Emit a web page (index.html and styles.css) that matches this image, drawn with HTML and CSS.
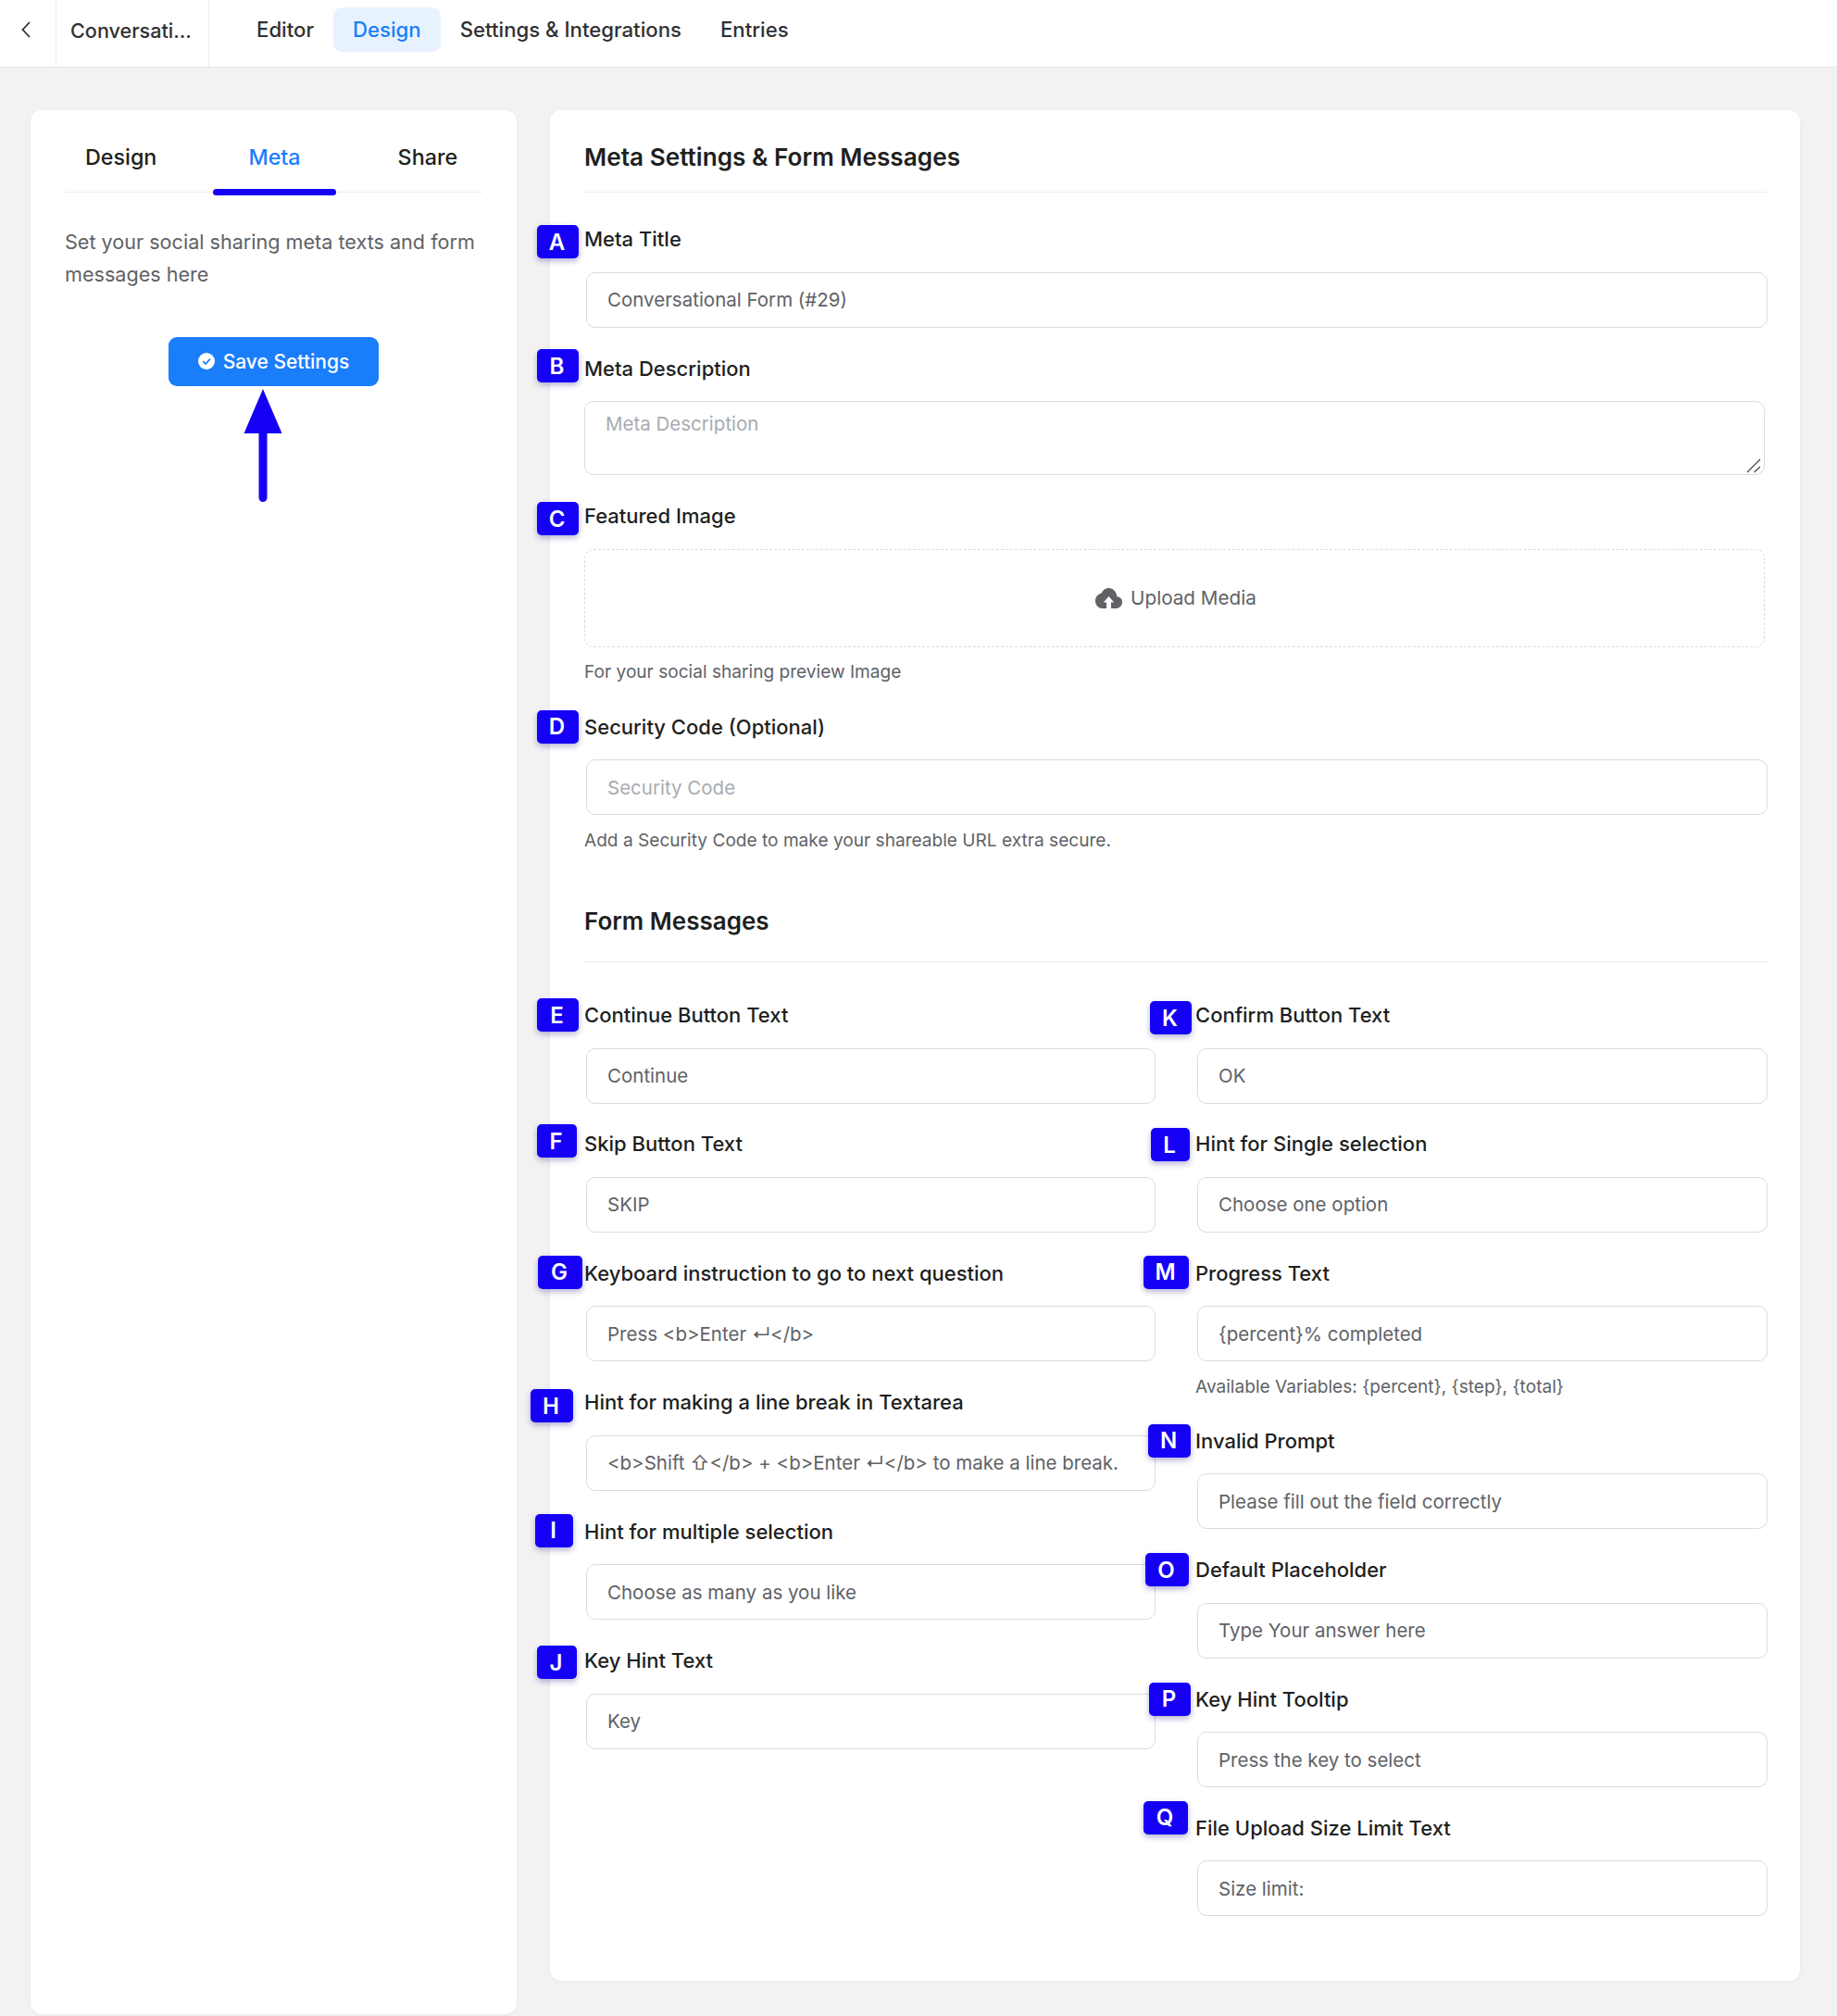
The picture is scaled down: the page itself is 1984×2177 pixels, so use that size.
FILE: index.html
```html
<!DOCTYPE html>
<html lang="en">
<head>
<meta charset="utf-8">
<title>Conversational Form - Meta Settings</title>
<link rel="stylesheet" href="styles.css">
</head>
<body>
<header class="topbar">
  <a class="back-cell"><svg class="back-icon" viewBox="0 0 12 20" width="12" height="20"><path d="M10 2 2.5 10 10 18" fill="none" stroke="#303133" stroke-width="1.8"/></svg></a>
  <div class="form-name">Conversati...</div>
  <nav class="topnav">
    <a class="topnav-item">Editor</a>
    <a class="topnav-item is-active">Design</a>
    <a class="topnav-item">Settings &amp; Integrations</a>
    <a class="topnav-item">Entries</a>
  </nav>
</header>
<main class="page">
  <aside class="side-card">
    <div class="side-tabs">
      <span class="side-tab">Design</span>
      <span class="side-tab is-active">Meta</span>
      <span class="side-tab">Share</span>
    </div>
    <p class="side-text">Set your social sharing meta texts and form messages here</p>
    <div class="save-wrap">
      <button class="save-btn"><svg class="save-icon" viewBox="0 0 18 18" width="18" height="18"><circle cx="9" cy="9" r="9" fill="#fff"/><path d="M5.2 9.2 8 12l4.9-5.4" fill="none" stroke="#1a7efb" stroke-width="1.7"/></svg>Save Settings</button>
      <svg class="up-arrow" viewBox="0 0 42 122" width="42" height="122"><path d="M21 0 41.500 48H25.500V117.500a4.500 4.500 0 0 1-9 0V48H.5Z" fill="#1500f5"/></svg>
    </div>
  </aside>
  <section class="main-card">
    <h2 class="card-title">Meta Settings &amp; Form Messages</h2>
    <div class="field inset2"><span class="badge b-a">A</span><label class="label">Meta Title</label><input class="input" value="Conversational Form (#29)"></div>
    <div class="field"><span class="badge b-b">B</span><label class="label">Meta Description</label>
      <div class="textarea-wrap"><textarea class="input textarea" placeholder="Meta Description"></textarea><svg class="grip" viewBox="0 0 18 16" width="18" height="16"><path d="M1 15 15 1M8.500 15 15 9" fill="none" stroke="#444" stroke-width="1.200"/></svg></div></div>
    <div class="field"><span class="badge b-c">C</span><label class="label">Featured Image</label>
      <div class="upload"><svg class="cloud" viewBox="0 0 29 22" width="29" height="22"><path d="M23.400 9.300C22.900 4 19 0 14.500 0 11 0 8 2.300 6.500 5.700 2.800 6.200 0 9.700 0 13.800 0 18.300 3.200 22 7.200 22H12V15.500H8.800L14.500 9l5.700 6.500H17V22h5.400C26 22 29 18.800 29 15c0-3-2.400-5.500-5.600-5.700Z" fill="#606266"/></svg>Upload Media</div>
      <p class="hint">For your social sharing preview Image</p></div>
    <div class="field inset2"><span class="badge b-d">D</span><label class="label">Security Code (Optional)</label><input class="input" placeholder="Security Code"><p class="hint">Add a Security Code to make your shareable URL extra secure.</p></div>
    <h3 class="section-title">Form Messages</h3>
    <div class="columns">
      <div class="column inset2">
        <div class="field"><span class="badge b-e">E</span><label class="label">Continue Button Text</label><input class="input" value="Continue"></div>
        <div class="field"><span class="badge b-f">F</span><label class="label">Skip Button Text</label><input class="input" value="SKIP"></div>
        <div class="field"><span class="badge b-g">G</span><label class="label">Keyboard instruction to go to next question</label><input class="input" value="Press &lt;b&gt;Enter ↵&lt;/b&gt;"></div>
        <div class="field"><span class="badge b-h">H</span><label class="label">Hint for making a line break in Textarea</label><input class="input" value="&lt;b&gt;Shift ⇧&lt;/b&gt; + &lt;b&gt;Enter ↵&lt;/b&gt; to make a line break."></div>
        <div class="field"><span class="badge b-i">I</span><label class="label">Hint for multiple selection</label><input class="input" value="Choose as many as you like"></div>
        <div class="field"><span class="badge b-j">J</span><label class="label">Key Hint Text</label><input class="input" value="Key"></div>
      </div>
      <div class="column inset2">
        <div class="field"><span class="badge b-k">K</span><label class="label">Confirm Button Text</label><input class="input" value="OK"></div>
        <div class="field"><span class="badge b-l">L</span><label class="label">Hint for Single selection</label><input class="input" value="Choose one option"></div>
        <div class="field"><span class="badge b-m">M</span><label class="label">Progress Text</label><input class="input" value="{percent}% completed"><p class="hint">Available Variables: {percent}, {step}, {total}</p></div>
        <div class="field"><span class="badge b-n">N</span><label class="label">Invalid Prompt</label><input class="input" value="Please fill out the field correctly"></div>
        <div class="field"><span class="badge b-o">O</span><label class="label">Default Placeholder</label><input class="input" value="Type Your answer here"></div>
        <div class="field"><span class="badge b-p">P</span><label class="label">Key Hint Tooltip</label><input class="input" value="Press the key to select"></div>
        <div class="field"><span class="badge b-q">Q</span><label class="label">File Upload Size Limit Text</label><input class="input" value="Size limit:"></div>
      </div>
    </div>
  </section>
</main>
</body>
</html>
```
FILE: styles.css
```css
* { box-sizing: border-box; }
html, body { margin: 0; padding: 0; }
body {
  height: 2177px;
  overflow: hidden;
  background: #f2f2f2;
  font-family: Inter, "Liberation Sans", sans-serif;
  color: #1e1f21;
  font-size: 22px;
}
.topbar {
  height: 73px;
  display: flex;
  background: #fff;
  border-bottom: 1px solid #e6e6e6;
}
.back-cell {
  width: 61px;
  display: flex;
  align-items: center;
  padding: 0 0 9px 22px;
  border-right: 1px solid #ececec;
}
.form-name {
  width: 165px;
  padding-left: 15px;
  line-height: 66px;
  font-size: 21.600px;
  font-weight: 500;
  color: #303133;
  border-right: 1px solid #ececec;
}
.topnav { display: flex; align-items: flex-start; padding: 8px 0 0 30px; gap: 0; }
.topnav-item {
  height: 48px;
  line-height: 48px;
  padding: 0 21px;
  border-radius: 9px;
  font-size: 22.200px;
  font-weight: 500;
  color: #303133;
}
.topnav-item.is-active { background: #e8f2ff; color: #1a7efb; }

.page {
  display: flex;
  align-items: flex-start;
  gap: 36px;
  padding: 46px 40px 0 33px;
}
.side-card, .main-card {
  background: #fff;
  border-radius: 12px;
  box-shadow: 0 1px 4px rgba(0, 0, 0, .04);
}
.side-card { width: 525px; height: 2056px; padding: 0 37px; flex: none; }
.main-card { width: 1350px; height: 2020px; padding: 0 35px 0 37px; flex: none; }

.side-tabs {
  display: flex;
  gap: 99px;
  height: 89px;
  padding: 33px 0 0 22px;
  border-bottom: 1px solid #ececec;
}
.side-tab { position: relative; font-size: 23.300px; line-height: 36px; font-weight: 500; color: #1e1f21; }
.side-tab:last-child { margin-left: 6px; }
.side-tab.is-active { color: #1a7efb; }
.side-tab.is-active::after {
  content: "";
  position: absolute;
  left: -38px;
  right: -38px;
  top: 52px;
  height: 7px;
  border-radius: 4px;
  background: #1500f5;
}
.side-text { margin: 36px 0 0; font-size: 21.600px; line-height: 34.500px; color: #606266; }
.save-wrap { position: relative; display: flex; justify-content: center; margin-top: 50.500px; }
.save-btn {
  display: flex;
  align-items: center;
  justify-content: center;
  gap: 9px;
  width: 227px;
  height: 53px;
  border: 0;
  border-radius: 9px;
  background: #1a7efb;
  color: #fff;
  font: 500 21px Inter, "Liberation Sans", sans-serif;
}
.up-arrow { position: absolute; left: 193px; top: 56px; }

.card-title {
  margin: 0;
  height: 89px;
  padding-top: 33px;
  font-size: 26.200px;
  line-height: 36px;
  font-weight: 600;
  border-bottom: 1px solid #ececec;
}
.main-card > .card-title { margin-bottom: 32px; }
.field { position: relative; margin-bottom: 26.200px; }
.label { display: block; height: 36px; line-height: 36px; margin-bottom: 17.500px; font-size: 22px; font-weight: 500; color: #1e1f21; }
.input {
  display: block;
  width: 100%;
  height: 60px;
  padding: 0 22px;
  background: #fff;
  border: 1px solid #dadbdd;
  border-radius: 10px;
  font: 400 20.500px Inter, "Liberation Sans", "DejaVu Sans", sans-serif;
  color: #606266;
  outline: 0;
}
.input::placeholder { color: #a8abb2; opacity: 1; }
.textarea-wrap { position: relative; width: 1275px; height: 80px; }
.textarea { height: 80px; padding: 11px 22px 8px; resize: none; }
.grip { position: absolute; right: 2px; bottom: 2px; }
.inset2 .input { width: calc(100% - 2px); margin-left: 2px; }
.upload {
  display: flex;
  align-items: center;
  justify-content: center;
  gap: 9px;
  width: 1275px;
  height: 106px;
  padding-left: 3px;
  border: 1px dashed #dadbdd;
  border-radius: 10px;
  font-size: 20.700px;
  color: #606266;
}
.hint { margin: 11.500px 0 0; height: 30px; line-height: 30px; font-size: 19.100px; color: #606266; }
.section-title {
  margin: 55.500px 0 39px;
  height: 62px;
  font-size: 26px;
  line-height: 36px;
  font-weight: 600;
  border-bottom: 1px solid #ececec;
}
.columns { display: grid; grid-template-columns: 617px 618px; column-gap: 43px; align-items: start; }
.column .field { margin-bottom: 25.900px; }
.column .hint { margin-top: 11.500px; }

.badge {
  position: absolute;
  left: -51px;
  top: 0;
  width: 45px;
  height: 36px;
  display: flex;
  align-items: center;
  justify-content: center;
  padding-right: 2px;
  border-radius: 5px;
  background: #1500f5;
  color: #fff;
  font-size: 24px;
  font-weight: 600;
  box-shadow: 0 3px 6px rgba(20, 0, 120, .3);
}
.b-a { top: 3px; }
.b-b { top: -2.500px; }
.b-c { top: 3px; }
.b-f { width: 43px; top: -3px; }
.b-g { left: -50px; width: 48px; top: -1px; }
.b-h { left: -58px; width: 46px; top: 4px; }
.b-i { left: -53px; width: 41px; top: -1px; }
.b-j { width: 43px; top: 2px; }
.b-k { left: -49px; top: 3px; }
.b-l { left: -48px; width: 42px; top: 1px; }
.b-m { left: -56px; width: 49px; top: -1px; }
.b-n { left: -51px; width: 46px; top: 0; }
.b-o { left: -54px; width: 47px; top: 0; }
.b-p { left: -50px; top: 0; }
.b-q { left: -56px; width: 48px; top: -11px; }
```
